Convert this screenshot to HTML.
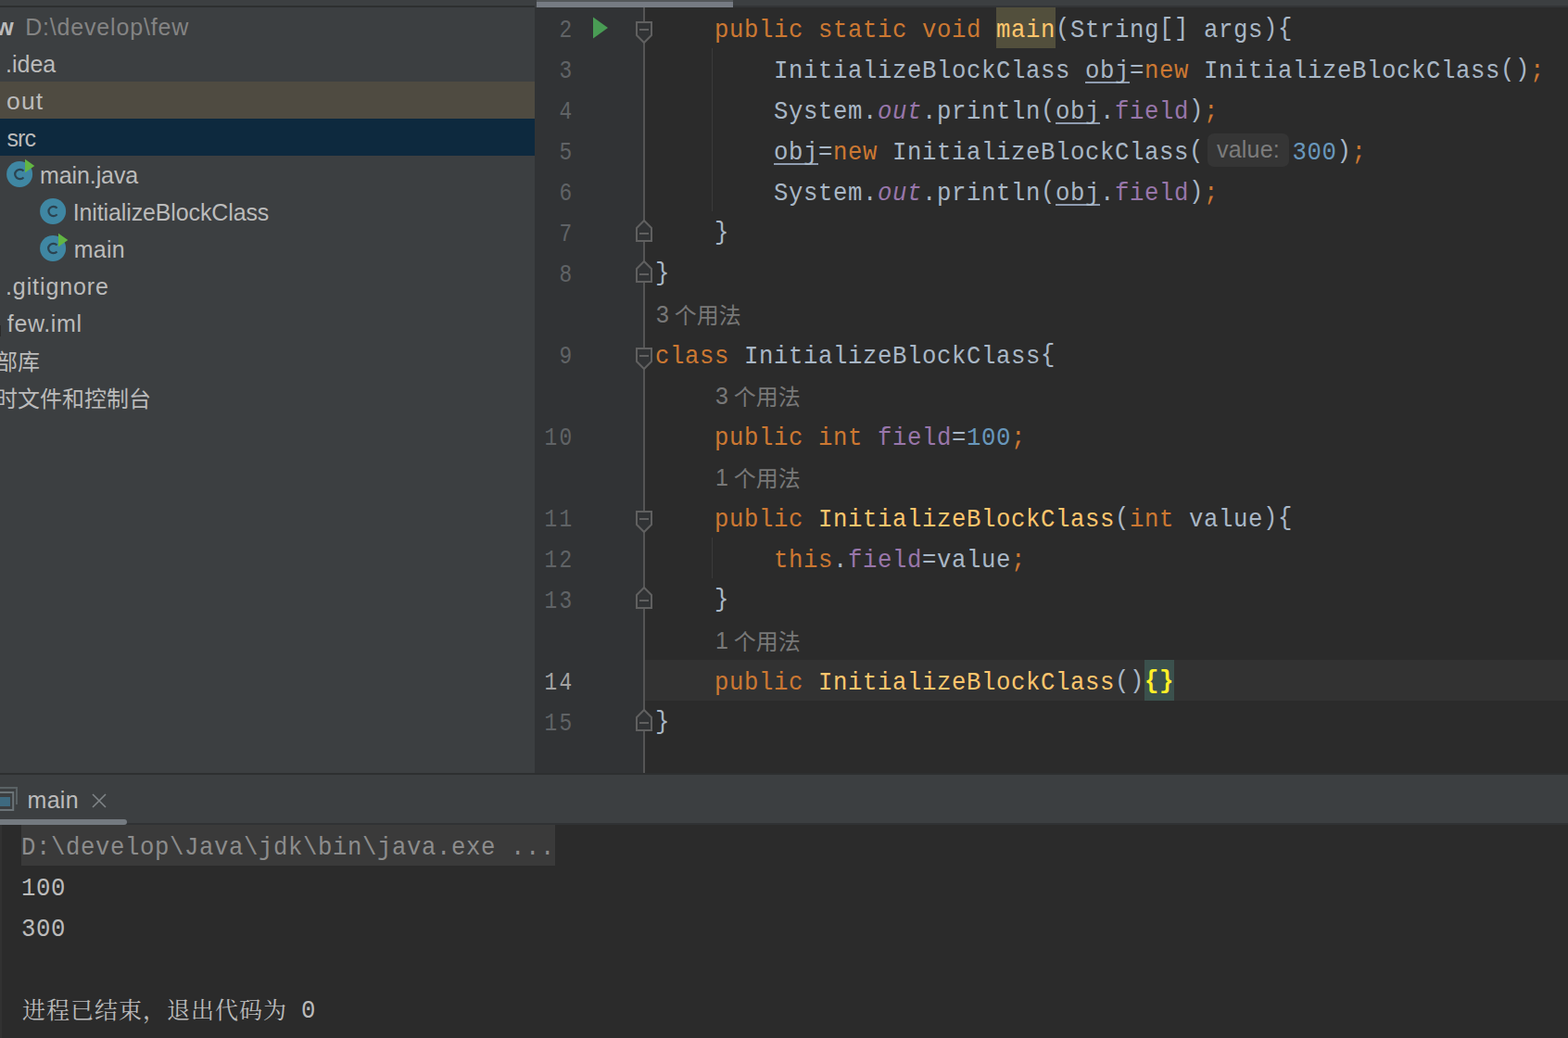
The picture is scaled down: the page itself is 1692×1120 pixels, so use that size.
<!DOCTYPE html>
<html lang="zh-CN">
<head>
<meta charset="utf-8">
<title>few – main.java</title>
<style>
*{box-sizing:border-box;margin:0;padding:0}
html,body{width:1692px;height:1120px;overflow:hidden;background:#2b2b2b}
body{position:relative;font-family:"Liberation Sans","Noto Sans CJK SC",sans-serif;color:#bbbbbb}
.abs{position:absolute}
/* ---------- project tree ---------- */
#tree{position:absolute;left:0;top:0;width:577px;height:835px;background:#3c3f41;overflow:hidden}
#tree .topline{position:absolute;left:0;top:6px;width:577px;height:2px;background:#2d2f30}
.row{position:absolute;left:0;width:577px;height:40px;line-height:40px;font-size:25px;white-space:nowrap;color:#bbbbbb}
.row .cjk{font-size:24px;top:2.5px !important}
.row span.t{position:absolute;top:0.6px;height:40px;display:block}
.row.out{background:#4f4b41}
.row.sel{background:#0d293e}
.ico{position:absolute;width:28px;height:28px;top:6px;overflow:visible}
/* ---------- editor ---------- */
#editor{position:absolute;left:577px;top:0;width:1115px;height:835px;background:#2b2b2b;overflow:hidden}
#gutter{position:absolute;left:0;top:0;width:118px;height:834px;background:#313335}
#foldline{position:absolute;left:117px;top:0;width:2px;height:834px;background:#555555}
#hscroll{position:absolute;left:0;top:0;width:1115px;height:8px;background:#3c3f41}
#hscroll .thumb{position:absolute;left:2px;top:0;width:212px;height:8px;background:#767b83;border-top:2px solid #53575a}
#hscroll .edge{position:absolute;left:214px;right:0;top:6px;height:2px;background:#333537}
.ln{position:absolute;left:0;width:53px;text-align:right;height:44px;line-height:44px;font-family:"Liberation Mono",monospace;font-size:28.5px;letter-spacing:2.9px;transform:scaleX(0.8);transform-origin:0 0;color:#606366;white-space:pre;padding-top:3px}
.cl{position:absolute;left:130px;height:44px;line-height:44px;font-family:"Liberation Mono","Noto Sans CJK SC",monospace;font-size:28.5px;letter-spacing:0.675px;transform:scaleX(0.9);transform-origin:0 0;color:#a9b7c6;white-space:pre;padding-top:3px}
.hint{position:absolute;height:44px;line-height:44px;font-family:"Liberation Sans","Noto Sans CJK SC",sans-serif;font-size:25px;color:#787878;white-space:pre;padding-top:1px}
.hint i{font-style:normal;font-size:24px;position:relative;top:1px;margin-left:-1px}
.k{color:#cc7832}.m{color:#ffc66d}.f{color:#9876aa}.n{color:#6897bb}.sf{color:#9876aa;font-style:italic}
.u{text-decoration:underline;text-decoration-thickness:1.6px;text-underline-offset:4px;text-decoration-skip-ink:none;text-decoration-color:#8f9cb0}
.hl{}
.cl b{font-weight:normal;position:relative;top:-2.5px}
.cl .br b{font-weight:bold}
.br{color:#ffef28;font-weight:bold}
.inlay{position:absolute;top:4px;height:36px;line-height:35px;border-radius:7px;background:#353535;color:#7c7c7c;font-family:"Liberation Sans",sans-serif;font-size:25px;letter-spacing:0.2px;text-align:center;white-space:pre}
.gap{display:inline-block;width:106px;height:1px}
#caretrow{position:absolute;left:118px;top:712px;width:997px;height:44px;background:#323232}
.guide{position:absolute;left:191px;width:1px;background:#3b3b3b}
.fold{position:absolute;left:108px;width:20px;height:26px}
/* ---------- run tool window ---------- */
#sep{position:absolute;left:0;top:834px;width:1692px;height:2px;background:#2d2f30}
#tabs{position:absolute;left:0;top:836px;width:1692px;height:54px;background:#3c3f41}
#tabs .bot{position:absolute;left:0;top:52px;width:1692px;height:2px;background:#303234}
#tabs .ul{position:absolute;left:-10px;top:48px;width:147px;height:6px;border-radius:3px;background:#747a80}
#tabs .name{position:absolute;left:29.6px;top:6.6px;height:40px;line-height:40px;font-size:25px;letter-spacing:0.27px;color:#bbbbbb}
#console{position:absolute;left:0;top:890px;width:1692px;height:230px;background:#2b2b2b}
#console .edge{position:absolute;left:0;top:0;width:2px;height:231px;background:#323232}
.co{position:absolute;left:23px;height:44px;line-height:44px;font-family:"Liberation Mono","Noto Serif CJK SC",monospace;font-size:28.5px;letter-spacing:0.675px;transform:scaleX(0.9);transform-origin:0 0;color:#bbbbbb;white-space:pre;padding-top:3px}
.zh{position:absolute;left:24px;height:44px;line-height:44px;font-family:"Liberation Mono","Noto Serif CJK SC",monospace;font-size:25px;letter-spacing:1px;color:#bbbbbb;white-space:pre}
</style>
</head>
<body>

<!-- ================= PROJECT TREE ================= -->
<div id="tree">
  <div class="topline"></div>
  <div class="row" style="top:8px"><span class="t" style="left:-27px;font-weight:bold">few</span><span class="t" style="left:27.2px;color:#848484;letter-spacing:0.82px">D:\develop\few</span></div>
  <div class="row" style="top:48px"><span class="t" style="left:6px">.idea</span></div>
  <div class="row out" style="top:88px"><span class="t" style="left:6.5px;letter-spacing:1.1px;transform:scaleX(1.06);transform-origin:0 0">out</span></div>
  <div class="row sel" style="top:128px"><span class="t" style="left:7.5px;letter-spacing:-0.9px">src</span></div>
  <div class="row" style="top:168px">
    <svg class="ico" style="left:7px" viewBox="0 0 28 28"><circle cx="14.1" cy="14" r="14" fill="#3f87a3"/><path d="M18.5 10.5 A5.4 5.1 0 1 0 18.5 17.5" fill="none" stroke="#2b4350" stroke-width="2.2"/><path d="M20 -2.2 L30.3 5 L20 12.2 Z" fill="#62b543"/></svg>
    <span class="t" style="left:43px;letter-spacing:-0.1px">main.java</span></div>
  <div class="row" style="top:208px">
    <svg class="ico" style="left:43px" viewBox="0 0 28 28"><circle cx="14.1" cy="14" r="14" fill="#3f87a3"/><path d="M18.6 10.6 A5.2 5.2 0 1 0 18.6 17.4" fill="none" stroke="#2b4350" stroke-width="2.2"/></svg>
    <span class="t" style="left:78.7px;letter-spacing:-0.12px">InitializeBlockClass</span></div>
  <div class="row" style="top:248px">
    <svg class="ico" style="left:43px" viewBox="0 0 28 28"><circle cx="14.1" cy="14" r="14" fill="#3f87a3"/><path d="M18.5 10.5 A5.4 5.1 0 1 0 18.5 17.5" fill="none" stroke="#2b4350" stroke-width="2.2"/><path d="M20 -2.2 L30.3 5 L20 12.2 Z" fill="#62b543"/></svg>
    <span class="t" style="left:79.7px;letter-spacing:0.27px">main</span></div>
  <div class="row" style="top:288px"><span class="t" style="left:6px;letter-spacing:0.9px">.gitignore</span></div>
  <div class="row" style="top:328px"><i style="position:absolute;left:0;top:23px;width:1px;height:12px;background:#2b2b2b"></i><span class="t" style="left:7.8px;letter-spacing:0.65px">few.iml</span></div>
  <div class="row" style="top:368px"><span class="t cjk" style="left:-5px">部库</span></div>
  <div class="row" style="top:408px"><span class="t cjk" style="left:-5px">时文件和控制台</span></div>
</div>

<!-- ================= EDITOR ================= -->
<div id="editor">
  <div id="caretrow"></div>
  <div class="abs" style="left:498px;top:8px;width:64px;height:44px;background:#524f3c"></div>
  <div class="abs" style="left:658px;top:712px;width:32px;height:44px;background:#3b514d"></div>
  <div class="inlay" style="left:726px;top:144px;width:88px">value:</div>
  <div id="gutter"></div>
  <div id="foldline"></div>
  <div class="guide" style="top:52px;height:176px"></div>
  <div class="guide" style="top:580px;height:44px"></div>
  <div class="ln" style="top:8px">2</div>
  <div class="cl" style="top:8px">    <span class="k">public static void </span><span class="m hl">main</span><b>(</b>String<b>[]</b> args<b>){</b></div>
  <div class="ln" style="top:52px">3</div>
  <div class="cl" style="top:52px">        InitializeBlockClass <span class="u">obj</span>=<span class="k">new </span>InitializeBlockClass<b>()</b><span class="k">;</span></div>
  <div class="ln" style="top:96px">4</div>
  <div class="cl" style="top:96px">        System.<span class="sf">out</span>.println<b>(</b><span class="u">obj</span>.<span class="f">field</span><b>)</b><span class="k">;</span></div>
  <div class="ln" style="top:140px">5</div>
  <div class="cl" style="top:140px">        <span class="u">obj</span>=<span class="k">new </span>InitializeBlockClass<b>(</b><span class="gap"></span><span class="n">300</span><b>)</b><span class="k">;</span></div>
  <div class="ln" style="top:184px">6</div>
  <div class="cl" style="top:184px">        System.<span class="sf">out</span>.println<b>(</b><span class="u">obj</span>.<span class="f">field</span><b>)</b><span class="k">;</span></div>
  <div class="ln" style="top:228px">7</div>
  <div class="cl" style="top:228px">    <b>}</b></div>
  <div class="ln" style="top:272px">8</div>
  <div class="cl" style="top:272px"><b>}</b></div>
  <div class="hint" style="left:131px;top:316px">3 <i>个用法</i></div>
  <div class="ln" style="top:360px">9</div>
  <div class="cl" style="top:360px"><span class="k">class </span>InitializeBlockClass<b>{</b></div>
  <div class="hint" style="left:195px;top:404px">3 <i>个用法</i></div>
  <div class="ln" style="top:448px">10</div>
  <div class="cl" style="top:448px">    <span class="k">public int </span><span class="f">field</span>=<span class="n">100</span><span class="k">;</span></div>
  <div class="hint" style="left:195px;top:492px">1 <i>个用法</i></div>
  <div class="ln" style="top:536px">11</div>
  <div class="cl" style="top:536px">    <span class="k">public </span><span class="m">InitializeBlockClass</span><b>(</b><span class="k">int </span>value<b>){</b></div>
  <div class="ln" style="top:580px">12</div>
  <div class="cl" style="top:580px">        <span class="k">this</span>.<span class="f">field</span>=value<span class="k">;</span></div>
  <div class="ln" style="top:624px">13</div>
  <div class="cl" style="top:624px">    <b>}</b></div>
  <div class="hint" style="left:195px;top:668px">1 <i>个用法</i></div>
  <div class="ln" style="top:712px;color:#a4a3a3">14</div>
  <div class="cl" style="top:712px">    <span class="k">public </span><span class="m">InitializeBlockClass</span><b>()</b><span class="br"><b>{}</b></span></div>
  <div class="ln" style="top:756px">15</div>
  <div class="cl" style="top:756px"><b>}</b></div>
  <svg class="fold" style="top:22px" viewBox="0 0 20 26"><path d="M2 2 H18 V16 L10 24 L2 16 Z" fill="#313335" stroke="#606060" stroke-width="2"/><path d="M5 10 H15" stroke="#606060" stroke-width="2"/></svg>
  <svg class="fold" style="top:236px" viewBox="0 0 20 26"><path d="M2 24 H18 V10 L10 2 L2 10 Z" fill="#313335" stroke="#606060" stroke-width="2"/><path d="M5 16 H15" stroke="#606060" stroke-width="2"/></svg>
  <svg class="fold" style="top:280px" viewBox="0 0 20 26"><path d="M2 24 H18 V10 L10 2 L2 10 Z" fill="#313335" stroke="#606060" stroke-width="2"/><path d="M5 16 H15" stroke="#606060" stroke-width="2"/></svg>
  <svg class="fold" style="top:374px" viewBox="0 0 20 26"><path d="M2 2 H18 V16 L10 24 L2 16 Z" fill="#313335" stroke="#606060" stroke-width="2"/><path d="M5 10 H15" stroke="#606060" stroke-width="2"/></svg>
  <svg class="fold" style="top:550px" viewBox="0 0 20 26"><path d="M2 2 H18 V16 L10 24 L2 16 Z" fill="#313335" stroke="#606060" stroke-width="2"/><path d="M5 10 H15" stroke="#606060" stroke-width="2"/></svg>
  <svg class="fold" style="top:632px" viewBox="0 0 20 26"><path d="M2 24 H18 V10 L10 2 L2 10 Z" fill="#313335" stroke="#606060" stroke-width="2"/><path d="M5 16 H15" stroke="#606060" stroke-width="2"/></svg>
  <svg class="fold" style="top:764px" viewBox="0 0 20 26"><path d="M2 24 H18 V10 L10 2 L2 10 Z" fill="#313335" stroke="#606060" stroke-width="2"/><path d="M5 16 H15" stroke="#606060" stroke-width="2"/></svg>
  <svg class="abs" style="left:62px;top:17px;width:18px;height:26px" viewBox="0 0 18 26"><path d="M1 1.5 L17 13 L1 24.5 Z" fill="#499c54"/></svg>
  <div id="hscroll"><div class="edge"></div><div class="thumb"></div></div>
</div>

<!-- ================= RUN TOOL WINDOW ================= -->
<div id="sep"></div>
<div id="tabs">
  <div class="bot"></div>
  <div class="ul"></div>
  <svg class="abs" style="left:0;top:13px;width:20px;height:26px" viewBox="0 0 20 26"><path d="M0 1 H18 V19" fill="none" stroke="#5a6265" stroke-width="2"/><rect x="-4" y="6" width="18.2" height="19" fill="none" stroke="#6b7478" stroke-width="2"/><rect x="-2" y="11" width="13" height="10" fill="#3e6a80"/></svg>
  <div class="name">main</div>
  <svg class="abs" style="left:99px;top:20px;width:16px;height:16px" viewBox="0 0 16 16"><path d="M1 1 L15 15 M15 1 L1 15" stroke="#7f8487" stroke-width="1.6" fill="none"/></svg>
</div>
<div id="console">
  <div class="edge"></div>
  <div class="abs" style="left:23px;top:0px;width:576px;height:44px;background:#3a3a3a"></div>
  <div class="co" style="top:0px"><span style="color:#8c8c8c">D:\develop\Java\jdk\bin\java.exe ...</span></div>
  <div class="co" style="top:44px">100</div>
  <div class="co" style="top:88px">300</div>
  <div class="zh" style="top:181px">进程已结束，退出代码为</div>
  <div class="co" style="top:176px;left:325px">0</div>
</div>
</body>
</html>
